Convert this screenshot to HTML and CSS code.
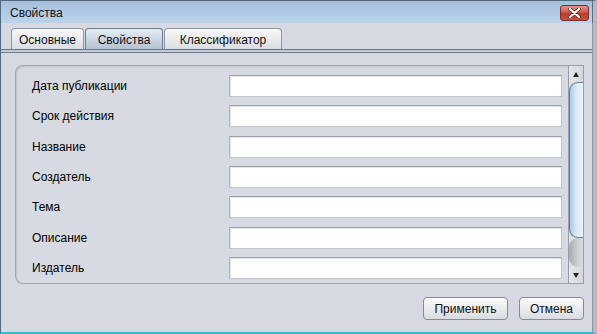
FILE: index.html
```html
<!DOCTYPE html>
<html>
<head>
<meta charset="utf-8">
<link rel="stylesheet" href="styles.css">
</head>
<body>
<div class="window">
  <div class="titlebar">
    <span class="title">Свойства</span>
    <div class="close">
      <svg width="13" height="10" viewBox="0 0 13 10">
        <path d="M2 1 L11 9 M11 1 L2 9" stroke="#5a2018" stroke-width="3.6" stroke-linecap="round"/>
        <path d="M2 1 L11 9 M11 1 L2 9" stroke="#ffffff" stroke-width="2.2" stroke-linecap="round"/>
      </svg>
    </div>
  </div>
  <div class="content">
    <div class="tabs">
      <div class="tab t1">Основные</div>
      <div class="tab t2 active">Свойства</div>
      <div class="tab t3">Классификатор</div>
    </div>
    <div class="tabline"></div>
    <div class="panel">
      <div class="form">
        <div class="row"><span class="label">Дата публикации</span><div class="input"></div></div>
        <div class="row"><span class="label">Срок действия</span><div class="input"></div></div>
        <div class="row"><span class="label">Название</span><div class="input"></div></div>
        <div class="row"><span class="label">Создатель</span><div class="input"></div></div>
        <div class="row"><span class="label">Тема</span><div class="input"></div></div>
        <div class="row"><span class="label">Описание</span><div class="input"></div></div>
        <div class="row"><span class="label">Издатель</span><div class="input"></div></div>
      </div>
      <div class="scrollbar">
        <div class="arrow up"><span class="tri-up"></span></div>
        <div class="track">
          <div class="thumb"></div>
          <div class="rest"></div>
        </div>
        <div class="arrow down"><span class="tri-down"></span></div>
      </div>
    </div>
    <div class="buttons">
      <div class="btn apply">Применить</div>
      <div class="btn cancel">Отмена</div>
    </div>
  </div>
</div>
</body>
</html>
```

FILE: styles.css
```css
html, body {
  margin: 0;
  padding: 0;
}
body {
  width: 597px;
  height: 334px;
  overflow: hidden;
  font-family: "Liberation Sans", Arial, sans-serif;
  font-size: 12px;
  color: #000;
}
.window {
  width: 597px;
  height: 334px;
  box-sizing: border-box;
  border-left: 1px solid #4f6a86;
  border-right: 4px solid #b4bac3;
  border-top: 1px solid #56677b;
  border-bottom: 2px solid #3fb2d2;
  background: #d6d9e1;
  display: flex;
  flex-direction: column;
  position: relative;
}
.titlebar {
  height: 22px;
  background: linear-gradient(#a6bfdc, #bcd3ec);
  display: flex;
  align-items: center;
  justify-content: space-between;
  padding: 0 4px 0 9px;
  box-shadow: inset -1px 0 0 #5d6c7e;
}
.title {
  font-size: 12px;
  color: #111;
  padding-top: 1px;
}
.close {
  width: 27px;
  height: 14px;
  border: 1px solid #7a3026;
  border-radius: 3px;
  background: linear-gradient(#e0958a 0%, #cc5a4c 45%, #b53b2e 55%, #c65244 100%);
  display: flex;
  align-items: center;
  justify-content: center;
  margin-top: 1px;
}
.close svg { display: block; }
.content {
  flex: 1;
  display: flex;
  flex-direction: column;
  box-shadow: inset -1px 0 0 #8d96a2;
}
.tabs {
  display: flex;
  padding-left: 10px;
  margin-top: 5px;
  height: 21px;
}
.tab {
  box-sizing: border-box;
  height: 21px;
  margin-right: 1px;
  border: 1px solid #8d96a3;
  border-bottom: none;
  border-radius: 4px 4px 0 0;
  background: linear-gradient(#f7f7f8, #dcdee3);
  display: flex;
  align-items: center;
  justify-content: center;
  padding-top: 2px;
  color: #111;
}
.tab.active {
  border-color: #6d7c90;
  background: linear-gradient(#e6ecf3, #b4c2d3);
}
.t1 { width: 73px; }
.t2 { width: 78px; }
.t3 { width: 118px; }
.tabline {
  height: 4px;
  margin-right: 1px;
  background: linear-gradient(#66748a 0, #66748a 1px, #c4cad3 1px, #c4cad3 3px, #707d91 3px);
}
.panel {
  margin: 12px 9px 0 14px;
  height: 219px;
  box-sizing: border-box;
  border: 1px solid #a2a7ae;
  border-right: none;
  border-radius: 8px 0 0 8px;
  background: #d7dae2;
  box-shadow: inset 1px 1px 2px rgba(0,0,0,0.12);
  display: flex;
}
.form {
  flex: 1;
  padding: 5px 0 0 16px;
  display: grid;
  grid-template-rows: repeat(7, 30.33px);
  align-content: start;
}
.row {
  display: flex;
  align-items: center;
}
.label {
  width: 197px;
}
.input {
  width: 333px;
  height: 22px;
  box-sizing: border-box;
  background: #fff;
  border: 1px solid #c2c5ca;
  border-top-color: #9fa2a8;
  border-left-color: #b4b7bc;
  box-shadow: inset 1px 1px 0 #e2e3e5;
}
.scrollbar {
  width: 16px;
  box-sizing: border-box;
  border: 1px solid #979ea7;
  margin-top: -1px;
  margin-bottom: -1px;
  background: #dde0e6;
  display: flex;
  flex-direction: column;
}
.arrow {
  height: 16px;
  display: flex;
  align-items: center;
  justify-content: center;
  background: linear-gradient(90deg, #e4e7ec, #d4d8de);
}
.tri-up {
  width: 0; height: 0;
  border-left: 3px solid transparent;
  border-right: 3px solid transparent;
  border-bottom: 5px solid #222;
}
.tri-down {
  width: 0; height: 0;
  border-left: 3px solid transparent;
  border-right: 3px solid transparent;
  border-top: 5px solid #222;
}
.track {
  flex: 1;
  display: flex;
  flex-direction: column;
}
.thumb {
  height: 156px;
  box-sizing: border-box;
  border-left: 1px solid #6b7a8d;
  border-top: 1px solid #6b7a8d;
  border-bottom: 1px solid #6b7a8d;
  border-radius: 9px 0 0 9px;
  background: linear-gradient(90deg, #a9c7e2 0%, #d6e8f6 45%, #e9f3fb 100%);
}
.rest {
  flex: 1;
  border-radius: 9px 0 0 9px;
  background: linear-gradient(90deg, #a7abb1 0%, #c6c9ce 50%, #d9dce1 100%);
}
.buttons {
  display: flex;
  justify-content: flex-end;
  margin-top: 13px;
  padding-right: 9px;
  gap: 11px;
}
.btn {
  height: 23px;
  box-sizing: border-box;
  border: 1px solid #858b95;
  border-radius: 4px;
  background: linear-gradient(#fbfbfc, #e9ebee 50%, #d9dce1);
  display: flex;
  align-items: center;
  justify-content: center;
  color: #111;
}
.apply { width: 85px; }
.cancel { width: 65px; }
```
